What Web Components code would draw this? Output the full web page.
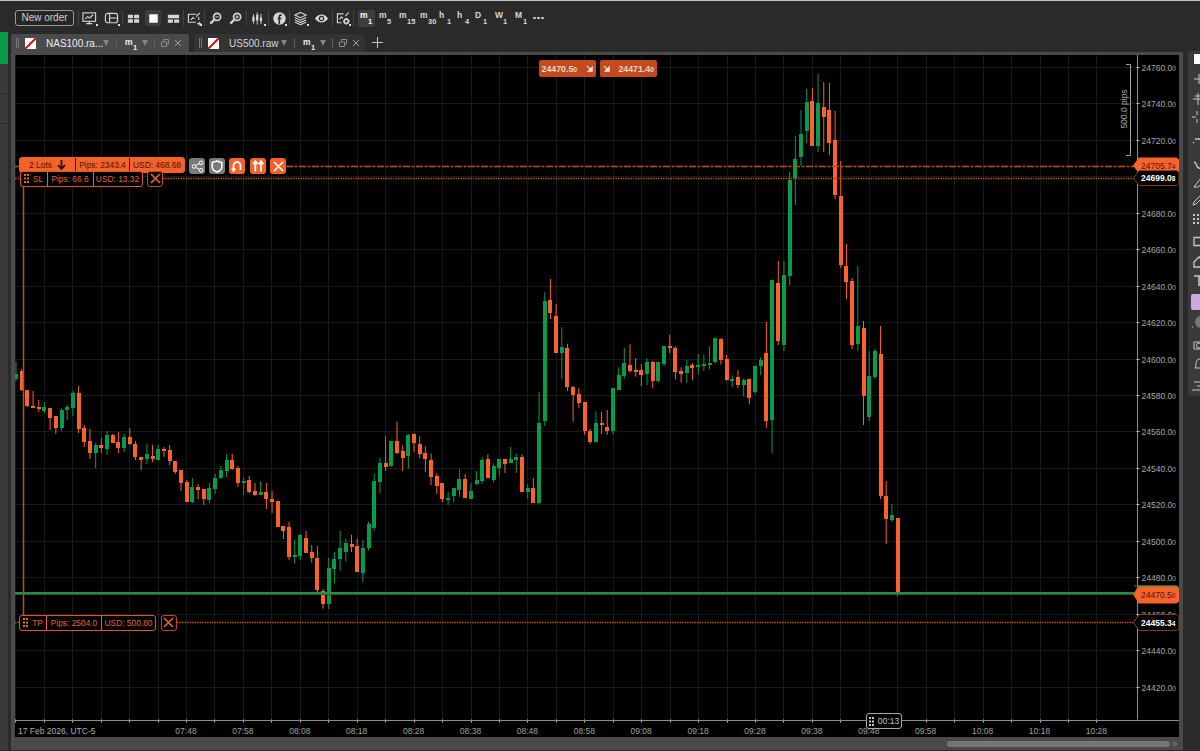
<!DOCTYPE html>
<html>
<head>
<meta charset="utf-8">
<style>
  html, body { margin: 0; padding: 0; background: #2a2a2a; overflow: hidden; }
  body { font-family: "Liberation Sans", Arial, sans-serif; }
</style>
</head>
<body>
<app-shell></app-shell>
<script>
const FONT = '"Liberation Sans", Arial, sans-serif';

// toolbar icons, 16x16
const ICONS = {
  monitor: '<rect x="1" y="2" width="13.5" height="9" stroke-width="1.2"/><path d="M3.5 8.5l2.5-2.5 2 1.5 4-3.5M4.5 13.5h6.5M7.7 11v2.5" stroke-width="1.2"/>',
  panel: '<rect x="1.5" y="2.5" width="13" height="10" rx="2.5" stroke-width="1.2"/><path d="M6 2.5v10M6 7.5h8.5" stroke-width="1.2"/>',
  grid: '<path fill="currentColor" stroke="none" d="M2 4h5.4v3.6H2zM8.6 4H14v3.6H8.6zM2 8.8h5.4v3.6H2zM8.6 8.8H14v3.6H8.6z"/>',
  single: '<rect x="3.5" y="3.5" width="9" height="9" fill="#fff" stroke="none"/>',
  split: '<path fill="currentColor" stroke="none" d="M2 4h12v3.8H2zM2 9h5.4v3.6H2zM8.6 9H14v3.6H8.6z"/>',
  shot: '<path d="M10 3.5H1.5v8.5h8M12.5 6.5v3" stroke-width="1.2"/><path d="M4 9.5l2.5-2.5 1.5 1.5M10 6l3.5-4M11 13.5h4M13 11.5v4" stroke-width="1.2"/>',
  zoomout: '<circle cx="9.7" cy="6.3" r="3.8" stroke-width="1.8"/><path d="M6.5 9.5L2.5 13.5" stroke-width="2.4"/><path d="M8 6.3h3.4" stroke-width="1.1"/>',
  zoomin: '<circle cx="9.7" cy="6.3" r="3.8" stroke-width="1.8"/><path d="M6.5 9.5L2.5 13.5" stroke-width="2.4"/><path d="M8 6.3h3.4M9.7 4.6V8" stroke-width="1.1"/>',
  bars: '<path fill="currentColor" stroke="none" d="M2.5 6h2.4v5H2.5zM6.5 4h2.4v6H6.5zM10.5 7h2.4v4h-2.4z"/><path d="M3.7 3.5v10M7.7 1.5v13M11.7 3v11" stroke-width="1"/>',
  fx: '<circle cx="8" cy="8" r="6.6" fill="currentColor" stroke="none"/><path d="M10.4 4.4H9.2c-1 0-1.4.6-1.4 1.6V14M6 8h4" stroke="#2a2a2a" stroke-width="1.7"/>',
  layers: '<path d="M8 1.5l6 2.8-6 2.8-6-2.8zM2 7l6 2.8L14 7M2 9.6l6 2.8 6-2.8M2 12l6 2.6 6-2.6" stroke-width="1.2"/>',
  eye: '<path fill="currentColor" stroke="none" d="M1 8c2-3 4.400-4.300 7-4.300S13 5 15 8c-2 3-4.400 4.300-7 4.300S3 11 1 8z"/><circle cx="8" cy="8" r="2.900" fill="#2a2a2a" stroke="none"/><circle cx="8" cy="8" r="1.600" fill="currentColor" stroke="none"/>',
  chartgear: '<path d="M8 3H1.500v9.500H6M3.500 9l2.500-2.500 1.500 1.200M10 5.500L13.500 1.500M12 2v0" stroke-width="1.2"/><circle cx="11" cy="11" r="2.300" stroke-width="1.800"/><path d="M11 7.500v1M11 13.500v1M7.500 11h1M13.500 11h1" stroke-width="1.400"/>'
};

function svgIcon(name, size) {
  return `<svg width="${size}" height="${size}" viewBox="0 0 16 16" fill="none" stroke="currentColor">${ICONS[name]}</svg>`;
}

// -------- top toolbar --------
const toolbarTpl = document.createElement('template');
toolbarTpl.innerHTML = `
<style>
  :host { display: flex; align-items: center; height: 32px; border-top: 1px solid #c4c4c4; background: #2a2a2a; padding: 3px 0 0 15px; box-sizing: border-box; color: #d6d6d6; font-family: ${FONT}; }
  .order { box-sizing: border-box; width: 59px; height: 16px; margin-right: 4px; border: 1px solid #9a9a9a; border-radius: 3px; color: #cfcfcf; font-size: 10px; line-height: 14px; text-align: center; background: #262626; }
  .btn { position: relative; display: flex; align-items: center; justify-content: center; height: 16px; flex: none; }
  .btn.on { background: #3d3d3d; border-radius: 2px; }
  .btn.more::after { content: ""; position: absolute; right: 2px; bottom: 0; width: 2px; height: 2px; background: #ddd; }
  .sep { width: 1px; height: 16px; background: #434343; flex: none; }
  .tf { position: relative; box-sizing: border-box; height: 17px; flex: none; font-size: 8.5px; font-weight: bold; color: #d8d8d8; }
  .tf b { position: absolute; left: 2px; top: 0; }
  .tf i { position: absolute; top: 7px; left: 10px; font-style: normal; font-size: 7.5px; }
  .tf.on { background: #3d3d3d; border-radius: 2px; color: #fff; }
  .dots { display: flex; gap: 1.500px; margin-left: 0; }
  .dots span { width: 2.500px; height: 2.500px; background: #d0d0d0; border-radius: 1px; }
</style>
<div class="order">New order</div>
<div class="sep"></div>
<div id="items" style="display:flex;align-items:center"></div>`;

class TopToolbar extends HTMLElement {
  constructor() {
    super();
    const root = this.attachShadow({ mode: 'open' });
    root.appendChild(toolbarTpl.content.cloneNode(true));
    const items = [
      ['monitor', 21, 1], ['panel', 22, 1], 0,
      ['grid', 20], ['single', 20, 0, 1], ['split', 20], 0,
      ['shot', 20, 1], 0,
      ['zoomout', 20], ['zoomin', 21], 0,
      ['bars', 21, 1], 0,
      ['fx', 20, 1], 0,
      ['layers', 21, 1], ['eye', 21], 0,
      ['chartgear', 20, 1], 0
    ];
    let html = '';
    for (const it of items) {
      if (!it) { html += '<div class="sep"></div>'; continue; }
      html += `<div class="btn${it[2] ? ' more' : ''}${it[3] ? ' on' : ''}" style="width:${it[0] === 'single' ? 16 : it[1]}px;${it[0] === 'single' ? 'margin:0 2px;' : ''}">${svgIcon(it[0], 15)}</div>`;
    }
    const frames = [['m', '1', 17, 1, 4, 2], ['m', '5', 20, 0, 0], ['m', '15', 21, 0, 0], ['m', '30', 19, 0, 0], ['h', '1', 18, 0, 0], ['h', '4', 18, 0, 0], ['D', '1', 20, 0, 0], ['W', '1', 20, 0, 0], ['M', '1', 20, 0, 0]];
    for (const f of frames) {
      html += `<div class="tf${f[3] ? ' on' : ''}" style="width:${f[2]}px;margin-left:${f[4]}px;margin-right:${f[5] || 0}px"><b>${f[0]}</b><i>${f[1]}</i></div>`;
    }
    html += '<div class="dots"><span></span><span></span><span></span></div>';
    root.getElementById('items').innerHTML = html;
  }
}
customElements.define('top-toolbar', TopToolbar);

// -------- chart tab --------
const tabTpl = document.createElement('template');
tabTpl.innerHTML = `
<style>
  :host { display: flex; align-items: center; height: 18px; box-sizing: border-box; background: #333; border-radius: 3px 3px 0 0; font-family: ${FONT}; color: #d8d8d8; font-size: 10px; flex: none; position: relative; }
  :host([active]) { background: #4a4a4a; color: #eee; }
  .grip { width: 3px; height: 10px; margin: 0 6px 0 5px; border-left: 1px solid #777; border-right: 1px solid #777; box-sizing: border-box; flex: none; }
  .flag { width: 11px; height: 11px; background: linear-gradient(135deg, #fff 44%, #e02020 44%, #e02020 56%, #fff 56%); flex: none; margin-right: 10px; }
  .name { width: var(--name-w, 54px); white-space: nowrap; flex: none; }
  .caret { width: 0; height: 0; border-left: 3.500px solid transparent; border-right: 3.500px solid transparent; border-top: 6px solid #848484; flex: none; }
  .sep { width: 1px; height: 10px; background: #5e5e5e; flex: none; }
  .tf { position: relative; width: 14px; height: 15px; font-size: 8.500px; font-weight: bold; color: #eee; flex: none; }
  .tf b { position: absolute; left: 0; top: 1px; }
  .tf i { position: absolute; left: 8px; top: 7px; font-size: 7.500px; font-style: normal; }
  svg { flex: none; }
</style>
<span class="grip"></span><span class="flag"></span><span class="name"><slot></slot></span>
<span class="caret" style="margin:0 7px 0 6px"></span><span class="sep"></span>
<span class="tf" style="margin-left:8px"><b>m</b><i>1</i></span>
<span class="caret" style="margin:0 5.500px 0 3px"></span><span class="sep"></span>
<svg style="margin-left:6px" width="8" height="8" viewBox="0 0 8 8"><path d="M.5 3h5v4.500h-5zM2.500 2V.5h5V5H6" fill="none" stroke="#8a8a8a"/></svg>
<svg style="margin-left:5px" width="8" height="8" viewBox="0 0 8 8"><path d="M1 1l6 6M7 1L1 7" stroke="#a0a0a0"/></svg>`;

class ChartTab extends HTMLElement {
  constructor() {
    super();
    this.attachShadow({ mode: 'open' }).appendChild(tabTpl.content.cloneNode(true));
  }
}
customElements.define('chart-tab', ChartTab);

// -------- order rows on the chart --------
const rowTpl = document.createElement('template');
rowTpl.innerHTML = `
<style>
  :host { position: absolute; display: flex; box-sizing: border-box; height: 16px; border-radius: 3px; font-family: ${FONT}; font-size: 8.400px; line-height: 14px; align-items: stretch; white-space: nowrap; background: #000; border: 1px solid #e0561f; color: #e8622e; }
  :host([solid]) { background: #f4612a; color: #4a1706; border-color: #f4612a; }
  ::slotted(span) { display: flex; align-items: center; justify-content: center; border-left: 1px solid currentColor; box-sizing: border-box; }
  ::slotted(span:first-child) { border-left: 0; }
</style>
<slot></slot>`;

class OrderRow extends HTMLElement {
  constructor() {
    super();
    this.attachShadow({ mode: 'open' }).appendChild(rowTpl.content.cloneNode(true));
  }
}
customElements.define('order-row', OrderRow);

const actionTpl = document.createElement('template');
actionTpl.innerHTML = `
<style>
  :host { position: absolute; display: flex; align-items: center; justify-content: center; box-sizing: border-box; width: 16px; height: 16px; border-radius: 3px; background: #f4612a; color: #fff; }
  :host([gray]) { background: #7a7a7a; }
  :host([outline]) { background: #000; border: 1px solid #c04a1c; color: #f4612a; }
</style>
<slot></slot>`;

class OrderAction extends HTMLElement {
  constructor() {
    super();
    this.attachShadow({ mode: 'open' }).appendChild(actionTpl.content.cloneNode(true));
  }
}
customElements.define('order-action', OrderAction);

// -------- chart --------
const ORANGE = '#f9622a', GREEN = '#0a9a4b', LINE = '#c24c1d';
const O = 0, G = 1;
// first stretch, page pixels: bodyTop, bodyBottom, wickTop, wickBottom, colour
const seg1 = [[375,380,363,382,G],[372,391,370,392,O],[391,407,391,408,O],[407,409,392,409,O],[408,410,401,413,O],[408,412,403,414,G],[409,419,409,431,O],[417,429,417,435,O],[411,429,409,432,G],[408,411,406,421,G],[394,409,392,417,G],[394,430,387,434,O],[429,443,426,448,O],[442,454,430,460,O],[446,454,444,469,G],[446,449,439,454,O],[436,450,432,456,G],[436,444,435,444,O],[443,449,433,454,O],[438,449,435,453,G],[438,445,429,446,O],[445,458,442,461,O],[458,461,458,471,O],[455,460,445,465,G],[457,460,446,463,O],[450,461,446,461,G],[450,452,448,458,O],[451,462,446,466,O],[462,473,462,475,O],[471,484,471,492,O],[483,503,481,503,O],[488,503,479,504,G],[488,491,485,500,O],[490,500,490,506,O],[489,501,484,504,G],[479,490,475,495,G],[471,479,467,480,G],[461,472,455,478,G],[461,470,455,471,O],[469,484,467,488,O],[482,484,478,496,G],[481,493,477,494,O],[492,496,484,497,O],[493,496,482,496,G],[493,500,484,510,O],[500,503,492,514,O],[502,528,502,528,O],[527,532,527,540,O]];
// middle stretch, zoomed pixels (3x, from 285,275)
const seg2 = [[760,848,743,857,O],[843,846,798,869,G],[784,845,780,857,G],[792,837,771,837,O],[833,852,813,866,O],[853,947,816,962,O],[950,991,945,1004,O],[882,991,852,1005,G],[855,885,834,928,G],[823,855,771,890,G],[807,833,795,862,G],[809,819,782,834,O],[816,893,794,893,O],[821,896,798,923,G],[750,823,743,830,G],[621,762,600,770,G],[567,623,552,657,G],[567,579,487,591,O],[502,576,502,578,G],[502,537,443,540,O],[531,552,514,591,O],[482,547,480,584,G],[480,508,478,535,O],[509,540,487,552,O],[536,554,517,594,O],[558,609,538,633,O],[606,636,598,660,O],[628,674,628,684,O],[672,677,653,693,G],[642,667,642,684,G],[614,647,585,668,G],[614,671,600,671,O],[651,674,627,674,G],[618,630,591,632,G],[558,621,550,628,G],[555,611,541,613,O],[576,618,568,626,G],[555,582,555,605,G],[556,570,556,597,O],[555,567,519,567,G],[550,557,538,597,G],[550,654,541,655,O],[643,654,630,675,G],[642,686,612,686,O],[446,688,353,690,G],[80,442,55,456,G],[78,116,15,135,O],[126,238,90,238,O],[219,238,160,316,G],[221,338,209,351,O],[339,362,335,443,O],[360,387,343,403,O],[385,472,385,482,O],[470,504,465,511,O],[446,504,412,506,G],[447,453,414,480,O],[460,472,408,482,O],[343,471,343,482,G],[304,347,280,347,G],[267,306,222,314,G],[273,291,211,296,O],[289,292,252,308,O],[289,302,270,336,O],[263,301,253,333,G],[263,321,261,343,O],[265,321,265,325,G],[217,269,217,276,G],[216,222,182,238,O],[222,294,217,316,O],[292,299,280,326,O],[277,297,258,326,G],[273,282,268,318,O],[273,278,240,302,G],[270,276,243,291,G],[267,269,217,287,G],[192,264,192,269,G],[195,258,193,272,O],[255,318,243,320,O],[314,317,304,340,G],[309,332,289,342,O],[317,332,314,367,G],[314,372,314,391,O],[277,354,277,360,G],[258,276,250,303,G],[236,440,143,461,O],[18,437,18,538,G]];
// last stretch, page pixels
const seg3 = [[284,342,262,346,O],[276,346,262,352,G],[181,277,173,286,G],[160,179,137,206,G],[135,158,111,167,G],[103,132,90,144,G],[102,147,89,147,O],[104,147,75,153,G],[108,118,83,153,O],[111,144,84,156,O],[141,196,112,200,O],[197,266,162,269,O],[267,283,245,300,O],[282,346,279,350,O],[327,345,267,352,G],[329,397,322,426,O],[377,418,352,422,G],[352,378,350,380,G],[355,497,327,500,O],[497,520,482,545,O],[516,521,505,523,G],[519,595,519,597,O]];

const candles = [
  ...seg1.map((c, i) => [16 + i * 5.69, ...c]),
  ...seg2.map((c, i) => [289 + i * 5.683, 275 + c[0] / 3, 275 + c[1] / 3, 275 + c[2] / 3, 275 + c[3] / 3, c[4]]),
  ...seg3.map((c, i) => [778.3 + i * 5.68, ...c])
];

const AXIS_X = 1137.5, AXIS_Y = 721.5;
const priceY = p => 396 + (24580 - p) / 20 * 36.45;

function smallTail(s, size) {
  return `${s.slice(0, -1)}<tspan font-size="${size}">${s.slice(-1)}</tspan>`;
}

function buildChartSvg() {
  let s = '';
  // grid
  for (let p = 24420; p <= 24760; p += 20) {
    const y = Math.round(priceY(p)) + .5;
    s += `<path d="M15 ${y}H${AXIS_X}" stroke="#191919"/>`;
  }
  for (let k = -6; k < 33; k++) {
    const x = Math.round(186 + k * 28.45) + .5;
    s += `<path d="M${x} 56V${AXIS_Y}" stroke="#191919"/>`;
    s += `<path d="M${x} ${AXIS_Y - 1}v3" stroke="#bbb"/>`;
  }
  // candles
  for (const [x, top, bot, wt, wb, col] of candles) {
    const fill = col === G ? GREEN : ORANGE;
    s += `<rect x="${(x - .5).toFixed(2)}" y="${wt.toFixed(1)}" width="1" height="${(wb - wt).toFixed(1)}" fill="${fill}"/>`;
    s += `<rect x="${Math.round(x - 2)}" y="${Math.round(top)}" width="4" height="${Math.max(2, Math.round(bot) - Math.round(top))}" fill="${fill}"/>`;
  }
  // axes
  s += `<path d="M${AXIS_X} 56V${AXIS_Y - 1}" stroke="#8c8c8c"/><path d="M15 ${AXIS_Y}H1179" stroke="#8c8c8c"/>`;
  for (let p = 24420; p <= 24760; p += 20) {
    const y = priceY(p);
    s += `<path d="M${AXIS_X - 1} ${Math.round(y) + .5}h3" stroke="#bbb"/>`;
    s += `<text x="1141.500" y="${(y + 4).toFixed(1)}" font-size="8.500" fill="#a8a8a8">${smallTail(p + '.00', 6.500)}</text>`;
  }
  const times = ['07:48','07:58','08:08','08:18','08:28','08:38','08:48','08:58','09:08','09:18','09:28','09:38','09:48','09:58','10:08','10:18','10:28'];
  times.forEach((t, i) => {
    s += `<text x="${(186 + i * 56.9).toFixed(1)}" y="735" font-size="8.500" text-anchor="middle" fill="#a0a0a0">${t}</text>`;
  });
  s += `<text x="18" y="735" font-size="8.500" fill="#b0b0b0">17 Feb 2026, UTC-5</text>`;
  // ruler
  s += `<path d="M1126 65.500h4.500v91h-4.500" fill="none" stroke="#a0a0a0"/>`;
  s += `<text transform="translate(1127 110) rotate(-90)" font-size="8.500" text-anchor="middle" fill="#a8a8a8">500.0 pips</text>`;
  // order and price lines
  s += `<path d="M15 167.500H19M286 167.500H1134" stroke="${LINE}" stroke-width="1.500" stroke-dasharray="7 1.500 3 1.500"/>`;
  s += `<path d="M15 179.500H20M163 179.500H1134" stroke="${LINE}" stroke-width="1.300" stroke-dasharray="1.500 1"/>`;
  s += `<path d="M23.500 186V616" stroke="${LINE}" stroke-width="1.500"/>`;
  s += `<path d="M15 623.500H19M177 623.500H1134" stroke="${LINE}" stroke-width="1.300" stroke-dasharray="1.500 1"/>`;
  s += `<path d="M15 594H1134" stroke="${GREEN}" stroke-width="2"/><path d="M15 595.500H1134" stroke="#7e3416"/>`;
  // price tags
  const tag = (y, h, fill, stroke, col, w, txt) => {
    const t = y - h / 2, b = y + h / 2;
    return `<path d="M1133.500 ${y}L1139 ${t}H1176.500L1179 ${t + 2}V${b - 2}L1176.500 ${b}H1139Z" fill="${fill}" stroke="${stroke}"/>` +
      `<text x="1141" y="${y + 3}" font-size="8.500" font-weight="${w}" fill="${col}">${smallTail(txt, 6.500)}</text>`;
  };
  s += tag(166.500, 15, ORANGE, ORANGE, '#4a1706', 'normal', '24705.74');
  s += tag(179, 15, '#000', '#8a3a18', '#fff', 'bold', '24699.08');
  s += tag(595.500, 17, ORANGE, ORANGE, '#4a1706', 'normal', '24470.50');
  s += `<path d="M1134 587H1177L1179 589" fill="none" stroke="${GREEN}" stroke-width="1.200"/>`;
  s += tag(623.500, 16, '#000', '#8a3a18', '#fff', 'bold', '24455.34');
  return s;
}

const dots = '<svg width="5" height="9" viewBox="0 0 5 9" fill="currentColor" style="margin-right:4px"><path d="M0 0h2v2H0zM3 0h2v2H3zM0 3.500h2v2H0zM3 3.500h2v2H3zM0 7h2v2H0zM3 7h2v2H3z"/></svg>';
const crossIcon = '<svg width="11" height="11" viewBox="0 0 11 11"><path d="M1 1l9 9M10 1l-9 9" stroke="currentColor" stroke-width="1.600"/></svg>';
const arrowDR = '<svg width="7" height="7" viewBox="0 0 8 8"><path d="M1 1l5 5M7 2.500V7H2.500z" fill="#f2e6df" stroke="#f2e6df" stroke-width="1.300"/></svg>';

const chartTpl = document.createElement('template');
chartTpl.innerHTML = `
<style>
  :host { display: block; position: relative; width: 1164px; height: 682px; background: #000; overflow: hidden; font-family: ${FONT}; }
  svg.main { display: block; }
  .quotes { position: absolute; left: 524px; top: 5px; display: flex; gap: 4px; }
  .quote { display: flex; align-items: center; justify-content: space-between; box-sizing: border-box; width: 57px; height: 17px; padding: 0 3px 0 2.500px; background: #c24a1e; border-radius: 2px; color: #e8d8cd; font-size: 8.800px; font-weight: bold; }
  .quote small { font-size: 6.800px; }
  .timer { position: absolute; left: 851px; top: 658px; box-sizing: border-box; width: 36px; height: 16px; display: flex; align-items: center; justify-content: center; background: #000; border: 1px solid #a8a8a8; border-radius: 3px; color: #c8c8c8; font-size: 8.500px; }
</style>
<svg class="main" width="1164" height="682" viewBox="15 56 1164 682" font-family='"Liberation Sans", Arial, sans-serif' id="plot"></svg>
<div class="quotes">
  <div class="quote"><span>24470.5<small>0</small></span>${arrowDR}</div>
  <div class="quote">${arrowDR}<span>24471.4<small>0</small></span></div>
</div>
<order-row solid style="left:4px;top:102px;width:166px">
  <span style="width:55px;gap:5px">2 Lots <svg width="9" height="10" viewBox="0 0 9 10"><path d="M4.500 0v8M1 5l3.500 4L8 5" fill="none" stroke="#2a0c02" stroke-width="1.800"/></svg></span><span style="width:54px">Pips: 2343.4</span><span style="width:55px">USD: 468.68</span>
</order-row>
<order-action gray style="left:174px;top:103px"><svg width="13" height="13" viewBox="0 0 13 13" fill="none" stroke="#fff"><circle cx="3" cy="6.500" r="1.800"/><circle cx="10" cy="2.800" r="1.800"/><circle cx="10" cy="10.200" r="1.800"/><path d="M4.600 5.600l3.800-2M4.600 7.400l3.800 2"/></svg></order-action>
<order-action gray style="left:194px;top:103px"><svg width="12" height="13" viewBox="0 0 12 13" fill="none" stroke="#fff" stroke-width="1.500"><path d="M6 1l4.800 1.600V7c0 2.500-2 4-4.800 5C3.200 11 1.200 9.500 1.200 7V2.600z"/></svg></order-action>
<order-action style="left:214px;top:103px"><svg width="12" height="13" viewBox="0 0 12 13" fill="none" stroke="#fff" stroke-width="1.800"><path d="M2.500 11V5.500a3.500 3.500 0 0 1 7 0V10M.8 8.500l1.700 2.500 1.700-2.500"/></svg></order-action>
<order-action style="left:234.500px;top:103px"><svg width="12" height="12" viewBox="0 0 12 12" fill="none" stroke="#fff" stroke-width="1.800"><path d="M3.300 11.500V2M9 11.500V2M1 4.200l2.300-3 2.300 3M6.700 4.200L9 1.200l2.300 3"/></svg></order-action>
<order-action style="left:255px;top:103px">${crossIcon}</order-action>
<order-row style="left:4.500px;top:115.500px;width:123px">
  <span style="width:26px">${dots}SL</span><span style="width:46px">Pips: 66.6</span><span style="width:49px">USD: 13.32</span>
</order-row>
<order-action outline style="left:132px;top:115.500px">${crossIcon}</order-action>
<order-row style="left:4px;top:559.500px;width:137px">
  <span style="width:26px">${dots}TP</span><span style="width:55px">Pips: 2504.0</span><span style="width:54px">USD: 500.80</span>
</order-row>
<order-action outline style="left:145.500px;top:559.500px">${crossIcon}</order-action>
<div class="timer">${dots}00:13</div>`;

class ChartView extends HTMLElement {
  constructor() {
    super();
    const root = this.attachShadow({ mode: 'open' });
    root.appendChild(chartTpl.content.cloneNode(true));
    root.getElementById('plot').innerHTML = buildChartSvg();
  }
}
customElements.define('chart-view', ChartView);

// -------- right drawing tools, cut off by the window edge --------
const toolsTpl = document.createElement('template');
toolsTpl.innerHTML = `
<style>
  :host { display: block; width: 17px; flex: none; box-sizing: border-box; padding: 19px 0 0 5px; background: #2a2a2a; }
  .panel { width: 12px; height: 345px; background: #3a3a3a; border-radius: 3px 0 0 3px; overflow: hidden; color: #c8c8c8; }
  .it { display: block; width: 16px; height: 16px; margin-left: 3px; }
  .pick { width: 9px; height: 15px; margin-left: 3px; background: #c9a9e2; border-radius: 2px 0 0 2px; }
</style>
<div class="panel" id="p"></div>`;

const TOOL_ITEMS = [
  [60, '<path d="M3 3h8v10H3z" fill="#fff"/>'],
  [80, '<path d="M8 3v10M3 8h10" stroke="currentColor"/>'],
  [100, '<path d="M7 2v12M2 8h11M4 5h6" stroke="currentColor"/>'],
  [118, '<path d="M6 2v4M6 10v4M1 8h4M9 8h6" stroke="currentColor"/>'],
  [140, '<path d="M2 12l1-1M4 8h12" stroke="currentColor" stroke-width="1.300"/>'],
  [168, '<path d="M3 3c4 1 1 5 5 6s2 4 6 4" stroke="currentColor" fill="none" stroke-width="1.300"/>'],
  [183, '<path d="M3 13L10 4l4 3-7 6z" stroke="currentColor" fill="none"/>'],
  [200, '<path d="M2 14l3-1 8-8-2-2-8 8z" stroke="currentColor" fill="none"/>'],
  [220, '<path d="M2 3h2v2H2zM6 3h2v2H6zM10 3h2v2h-2zM2 7h2v2H2zM6 7h2v2H6zM10 7h2v2h-2zM2 11h2v2H2zM6 11h2v2H6z" fill="currentColor"/>'],
  [243, '<path d="M3 3.500h10v8H3z" stroke="currentColor" fill="none" stroke-width="1.300"/>'],
  [263, '<path d="M3 8l5-5 5 5v5H3z" stroke="currentColor" fill="none" stroke-width="1.300"/>'],
  [282, '<path d="M3 3h10M8 3v10" stroke="currentColor" stroke-width="1.600"/>'],
  [303, null],
  [323, '<circle cx="10" cy="8" r="6" fill="#777"/><path d="M1 13h1" stroke="currentColor"/>'],
  [345, '<path d="M3 6h10v7H3z" stroke="currentColor" fill="none"/><circle cx="8" cy="9.500" r="2.500" stroke="currentColor" fill="none"/>'],
  [365, '<path d="M4 12c1-1 1-3 1-5s1.500-4 3.500-4 3.500 2 3.500 4 0 4 1 5z" stroke="currentColor" fill="none"/>'],
  [387, '<path d="M3 4h10M6 8h8M1 12h11" stroke="currentColor" stroke-width="1.200"/>']
];

class RightTools extends HTMLElement {
  constructor() {
    super();
    const root = this.attachShadow({ mode: 'open' });
    root.appendChild(toolsTpl.content.cloneNode(true));
    let prev = 44; // panel top is 52, first item centre is 8 below its own top
    let html = '';
    for (const [cy, d] of TOOL_ITEMS) {
      const gap = cy - prev - 16;
      html += d
        ? `<svg class="it" viewBox="0 0 16 16" style="margin-top:${gap}px">${d}</svg>`
        : `<div class="pick" style="margin-top:${gap}px;height:16px"></div>`;
      prev = cy;
    }
    root.getElementById('p').innerHTML = html;
  }
}
customElements.define('right-tools', RightTools);

// -------- shell --------
const shellTpl = document.createElement('template');
shellTpl.innerHTML = `
<style>
  :host { display: block; width: 1200px; height: 751px; overflow: hidden; background: #2a2a2a; }
  .row { display: flex; height: 718px; }
  .rail { width: 8px; flex: none; background: #3a3a3a; }
  .rail .mark { height: 32px; background: #0a9a4b; }
  .rail .line { height: 30px; border-bottom: 1px solid #2c2c2c; box-sizing: border-box; }
  .pane { flex: 1; padding-left: 3px; min-width: 0; }
  .tabs { display: flex; align-items: flex-end; height: 20px; gap: 5px; }
  .plus { margin-left: 2px; margin-bottom: 4px; }
  .frame { background: #4a4a4a; padding: 3px 4px 0; height: 698px; box-sizing: border-box; }
  .scroll { display: flex; align-items: center; height: 13px; }
  .thumb { margin-left: 932px; width: 223px; height: 6px; background: #767676; border-radius: 3px; }
  .end { margin-left: 3px; width: 0; height: 0; border-left: 5px solid #6a6a6a; border-top: 3px solid transparent; border-bottom: 3px solid transparent; }
</style>
<top-toolbar></top-toolbar>
<div class="row">
  <div class="rail"><div class="mark"></div><div class="line"></div><div class="line"></div></div>
  <div class="pane">
    <div class="tabs">
      <chart-tab active style="width:178px;--name-w:51px">NAS100.ra...</chart-tab>
      <chart-tab style="width:171px;--name-w:46px">US500.raw</chart-tab>
      <svg class="plus" width="11" height="11" viewBox="0 0 11 11"><path d="M5.500 0v11M0 5.500h11" stroke="#c8c8c8"/></svg>
    </div>
    <div class="frame">
      <chart-view></chart-view>
      <div class="scroll"><div class="thumb"></div><div class="end"></div></div>
    </div>
  </div>
  <right-tools></right-tools>
</div>`;

class AppShell extends HTMLElement {
  constructor() {
    super();
    this.attachShadow({ mode: 'open' }).appendChild(shellTpl.content.cloneNode(true));
  }
}
customElements.define('app-shell', AppShell);
</script>
</body>
</html>
